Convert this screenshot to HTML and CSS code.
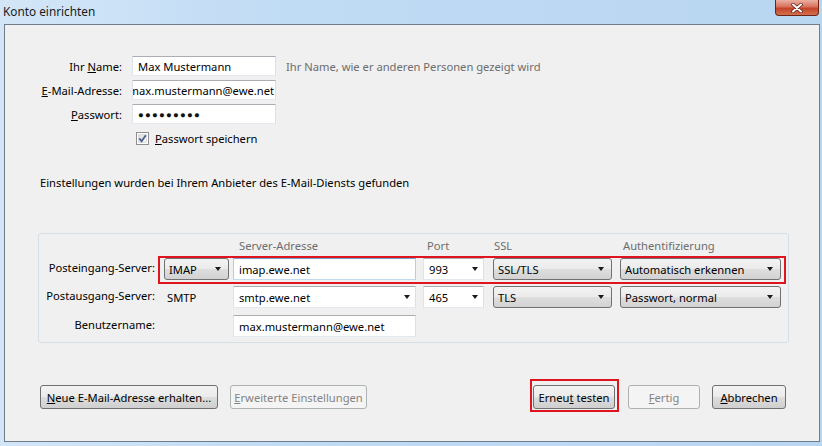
FILE: index.html
```html
<!doctype html>
<html lang="de">
<head>
  <meta charset="utf-8" />
  <title>Konto einrichten</title>
  <link rel="stylesheet" href="styles.css">
</head>
<body>
  <div class="window">
    <div class="titlebar">
      <span class="title">Konto einrichten</span>
      <button class="close" aria-label="Schließen">
        <svg width="12" height="10" viewBox="0 0 12 10">
          <path d="M2 1.5L10 8.5M10 1.5L2 8.5" stroke="#5a1a10" stroke-width="3.4" stroke-linecap="round"/>
          <path d="M2 1.5L10 8.5M10 1.5L2 8.5" stroke="#fff" stroke-width="2" stroke-linecap="round"/>
        </svg>
      </button>
    </div>

    <div class="client">
      <div class="ident">
        <label class="lbl">Ihr <u>N</u>ame:</label>
        <div class="field">Max Mustermann</div>
        <span class="hint">Ihr Name, wie er anderen Personen gezeigt wird</span>

        <label class="lbl"><u>E</u>-Mail-Adresse:</label>
        <div class="field scrolled"><span>max.mustermann@ewe.net</span></div>
        <span></span>

        <label class="lbl"><u>P</u>asswort:</label>
        <div class="field pw">●●●●●●●●●</div>
        <span></span>

        <span></span>
        <div class="remember">
          <svg class="check" width="13" height="13" viewBox="0 0 13 13">
            <defs>
              <linearGradient id="cb" x1="0" y1="0" x2="1" y2="1">
                <stop offset="0" stop-color="#dcdcdc"/>
                <stop offset="1" stop-color="#fbfbfb"/>
              </linearGradient>
            </defs>
            <rect x="0.5" y="0.5" width="12" height="12" fill="#fff" stroke="#8e8f8f"/>
            <rect x="2.5" y="2.5" width="8" height="8" fill="url(#cb)" stroke="#d0d0d0" stroke-width="0.6"/>
            <path d="M3.3 6.4L5.6 9.2L9.8 3.2" fill="none" stroke="#4a5f8c" stroke-width="1.8"/>
          </svg>
          <span><u>P</u>asswort speichern</span>
        </div>
      </div>

      <p class="found">Einstellungen wurden bei Ihrem Anbieter des E-Mail-Diensts gefunden</p>

      <div class="servers">
        <div class="srv-head">
          <span class="c-type"></span>
          <span class="c-addr">Server-Adresse</span>
          <span class="c-port">Port</span>
          <span class="c-ssl">SSL</span>
          <span class="c-auth">Authentifizierung</span>
        </div>

        <div class="srv-row">
          <span class="srv-label">Posteingang-Server:</span>
          <div class="srv-ctrls hl">
            <div class="dd c-type">IMAP</div>
            <div class="field focus c-addr">imap.ewe.net</div>
            <div class="combo c-port">993</div>
            <div class="dd c-ssl">SSL/TLS</div>
            <div class="dd c-auth">Automatisch erkennen</div>
          </div>
        </div>

        <div class="srv-row">
          <span class="srv-label">Postausgang-Server:</span>
          <div class="srv-ctrls">
            <span class="plain c-type">SMTP</span>
            <div class="combo c-addr">smtp.ewe.net</div>
            <div class="combo c-port">465</div>
            <div class="dd c-ssl">TLS</div>
            <div class="dd c-auth">Passwort, normal</div>
          </div>
        </div>

        <div class="srv-row user">
          <span class="srv-label">Benutzername:</span>
          <div class="srv-ctrls">
            <span class="c-type"></span>
            <div class="field c-addr">max.mustermann@ewe.net</div>
          </div>
        </div>
      </div>

      <div class="actions">
        <div class="group">
          <button class="btn w-new"><u>N</u>eue E-Mail-Adresse erhalten...</button>
          <button class="btn w-adv" disabled><u>E</u>rweiterte Einstellungen</button>
        </div>
        <div class="group">
          <span class="mark"><button class="btn w-retry">Erneu<u>t</u> testen</button></span>
          <button class="btn w-done" disabled><u>F</u>ertig</button>
          <button class="btn w-cancel"><u>A</u>bbrechen</button>
        </div>
      </div>
    </div>
  </div>
</body>
</html>
```

FILE: styles.css
```css
*{box-sizing:border-box}
html,body{margin:0;height:100%}
body{
  font-family:"Noto Sans","Open Sans",sans-serif;
  font-size:11.2px;
  color:#000;
  background:#bcd8f2;
  overflow:hidden;
}

.window{
  width:822px;
  height:446px;
  display:flex;
  flex-direction:column;
  background:linear-gradient(90deg,#d3e6f8 0%,#c0dbf4 35%,#b9d6f1 100%);
}

.titlebar{
  height:24px;
  display:flex;
  align-items:flex-start;
  justify-content:space-between;
  padding-left:3px;
}
.title{line-height:23px;font-size:11.8px;color:#1b1b1b}
.close{
  width:44px;
  height:16px;
  margin-right:3px;
  padding:0;
  border:1px solid #6e2317;
  border-top:0;
  border-radius:0 0 4px 4px;
  background:linear-gradient(#eab0a2 0%,#d8715b 45%,#c4432a 55%,#d3704c 100%);
  display:flex;
  align-items:center;
  justify-content:center;
}

.client{
  flex:1;
  margin:0 2px 4px 4px;
  border:1px solid #6f7c8a;
  background:#f0f0f0;
  display:flex;
  flex-direction:column;
}

/* account identity */
.ident{
  margin-top:31px;
  display:grid;
  grid-template-columns:117px 144px auto;
  grid-auto-rows:20px;
  column-gap:10px;
  row-gap:4px;
  align-items:center;
}
.lbl{text-align:right}
.hint{color:#6d6d6d;white-space:nowrap}

.field{
  height:20px;
  background:#fff;
  border:1px solid;
  border-color:#abadb3 #dbdfe6 #e3e9ef #e2e3ea;
  padding:0 5px;
  display:flex;
  align-items:center;
  white-space:nowrap;
  overflow:hidden;
}
.field.scrolled{justify-content:flex-end;padding:0 1px}
.field.pw{font-size:9.6px;letter-spacing:1.2px;padding-left:5px;color:#111}
.field.focus{border-color:#7aa2cc #b3cde6 #c3d9ee #b3cde6}

.remember{display:flex;align-items:center;gap:6px;padding-left:4px}
.check{flex:none}

.found{margin:27px 0 0 35px;line-height:16px}

/* server settings */
.servers{
  margin:42px 30px 0 33px;
  border:1px solid #d5dfe5;
  border-radius:3px;
  padding-bottom:1px;
}
.srv-head{
  display:flex;
  height:22px;
  line-height:23px;
  padding-left:125px;
  color:#6d6d6d;
}
.srv-head .c-addr{padding-left:6px}
.srv-head .c-port{padding-left:4px}
.srv-head .c-ssl{padding-left:1px}
.srv-head .c-auth{padding-left:3px}

.srv-row{display:flex;align-items:flex-start}
.srv-row.user{margin-top:1px}
.srv-label{
  width:119px;
  padding-right:3px;
  text-align:right;
  height:24px;
  line-height:24px;
  white-space:nowrap;
}
.srv-ctrls{
  display:flex;
  border:2px solid transparent;
  padding:0 3px 2px 4px;
}
.srv-ctrls.hl{border-color:#e0141e}
.srv-ctrls > *{height:22px;flex:none}

.c-type{width:65px}
.c-addr{width:183px;margin-left:4px}
.c-port{width:61px;margin-left:7px}
.c-ssl{width:119px;margin-left:9px}
.c-auth{width:161px;margin-left:8px}

.plain{display:flex;align-items:center;padding-left:3px}

.dd,.combo{
  display:flex;
  align-items:center;
  justify-content:space-between;
  white-space:nowrap;
}
.dd::after,.combo::after{
  content:"";
  border-left:3.5px solid transparent;
  border-right:3.5px solid transparent;
  border-top:4px solid #1a1a1a;
}
.dd{
  border:1px solid #707070;
  border-radius:3px;
  background:linear-gradient(#f3f3f3 0%,#ebebeb 48%,#dedede 52%,#d2d2d2 100%);
  padding:0 7px 0 4px;
}
.combo{
  background:#fff;
  border:1px solid;
  border-color:#abadb3 #dbdfe6 #e3e9ef #e2e3ea;
  padding:0 5px 0 5px;
}

/* bottom buttons */
.actions{
  margin-top:42px;
  display:flex;
  justify-content:space-between;
  padding:0 33px 0 35px;
}
.group{display:flex;gap:12px;align-items:center}
.btn{
  height:24px;
  padding:0;
  font:inherit;
  color:#000;
  border:1px solid #707070;
  border-radius:3px;
  background:linear-gradient(#f3f3f3 0%,#ebebeb 48%,#dddddd 52%,#cfcfcf 100%);
  white-space:nowrap;
}
.btn:disabled{
  color:#838383;
  border-color:#adb2b5;
  background:#f4f4f4;
}
.w-new{width:178px}
.w-adv{width:137px}
.w-retry{width:82px;display:block}
.w-done{width:72px;margin-left:1px}
.w-cancel{width:74px}

.mark{position:relative;display:block}
.mark::after{
  content:"";
  position:absolute;
  top:-6px;right:-4px;bottom:-3px;left:-3px;
  border:2px solid #e0141e;
}
```
